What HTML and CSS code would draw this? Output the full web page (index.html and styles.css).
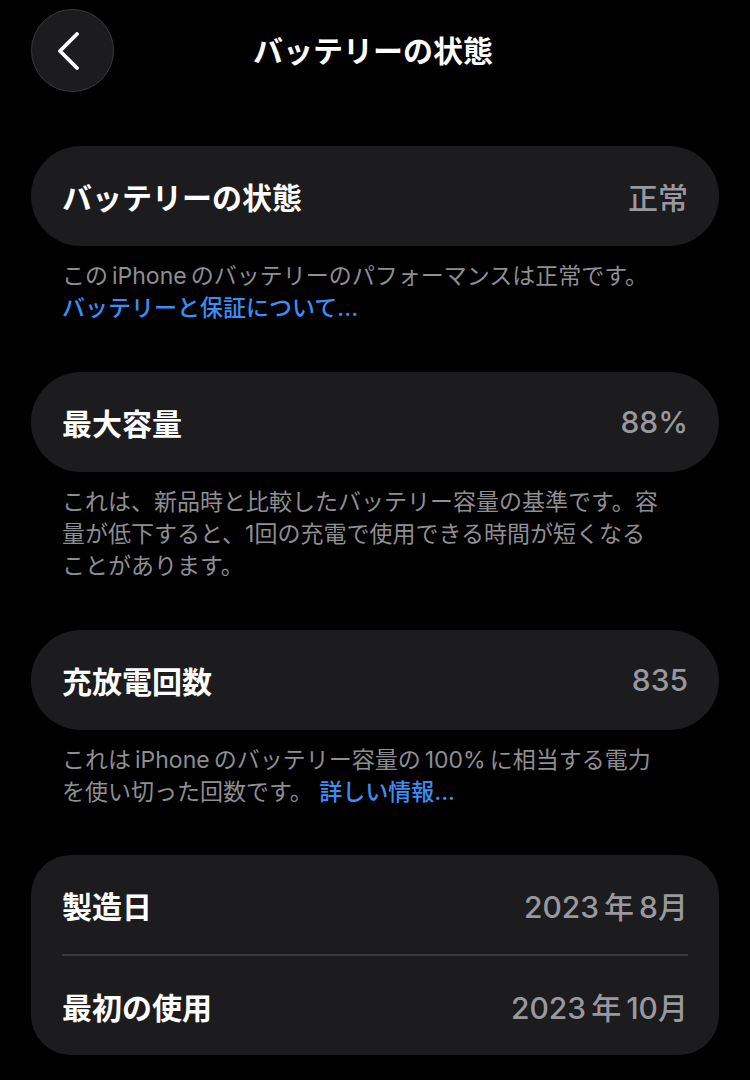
FILE: index.html
```html
<!DOCTYPE html>
<html lang="ja">
<head>
  <meta charset="UTF-8">
  <meta name="viewport" content="width=device-width, initial-scale=1.0">
  <title>バッテリーの状態</title>
  <link rel="stylesheet" href="styles.css">
</head>
<body>
  <header class="top-bar">
    <button class="back-btn" aria-label="戻る">
      <svg width="26" height="38" viewBox="0 0 26 38">
        <path d="M21 2 L4 19 L21 36" fill="none" stroke="#fff" stroke-width="3.8" stroke-linecap="round" stroke-linejoin="round"/>
      </svg>
    </button>
    <h1 class="title">バッテリーの状態</h1>
    <span></span>
  </header>

  <main>
    <div class="group">
      <div class="row">
        <span class="label">バッテリーの状態</span>
        <span class="value">正常</span>
      </div>
    </div>
    <p class="note">この<span class="latin">iPhone</span>のバッテリーのパフォーマンスは正常です。<br><a href="#" class="link">バッテリーと保証について...</a></p>

    <div class="group">
      <div class="row">
        <span class="label">最大容量</span>
        <span class="value">88%</span>
      </div>
    </div>
    <p class="note">これは、新品時と比較したバッテリー容量の基準です。容<br>量が低下すると、1回の充電で使用できる時間が短くなる<br>ことがあります。</p>

    <div class="group">
      <div class="row">
        <span class="label">充放電回数</span>
        <span class="value">835</span>
      </div>
    </div>
    <p class="note">これは<span class="latin">iPhone</span>のバッテリー容量の<span class="latin">100%</span>に相当する電力<br>を使い切った回数です。 <a href="#" class="link">詳しい情報...</a></p>

    <div class="group group-list">
      <div class="row">
        <span class="label">製造日</span>
        <span class="value">2023<span class="unit">年</span>8月</span>
      </div>
      <div class="divider"></div>
      <div class="row">
        <span class="label">最初の使用</span>
        <span class="value">2023<span class="unit">年</span>10月</span>
      </div>
    </div>
  </main>
</body>
</html>
```

FILE: styles.css
```css
body {
  background-color: #000;
  color: #fff;
  font-family: "Inter", "Noto Sans CJK JP", sans-serif;
  margin: 0;
  padding: 0 31px;
}

.top-bar {
  display: grid;
  grid-template-columns: 83px 1fr 83px;
  align-items: center;
  padding-top: 9px;
  margin-bottom: 54px;
}

.back-btn {
  width: 83px;
  height: 83px;
  border-radius: 50%;
  background-color: #1c1c1e;
  border: 1px solid #3a3a3c;
  display: flex;
  align-items: center;
  justify-content: center;
  padding: 0 8px 0 0;
  cursor: pointer;
}

.title {
  margin: 0 0 4px -4px;
  text-align: center;
  font-size: 30px;
  font-weight: 700;
}

main {
  display: flex;
  flex-direction: column;
}

.group {
  background-color: #1c1c1e;
  border-radius: 50px;
  padding: 0 31px;
}

.group-list {
  border-radius: 40px;
  margin-top: -1px;
}

.row {
  height: 100px;
  display: flex;
  align-items: center;
  justify-content: space-between;
}

.group-list .row {
  height: 99px;
}

.label {
  font-size: 30px;
  font-weight: 700;
}

.value {
  font-size: 30px;
  font-weight: 500;
  color: #98989e;
}

.unit {
  margin: 0 5px;
}

.divider {
  height: 2px;
  background-color: #3a3a3c;
}

.note {
  margin: 14px 0 48px;
  padding: 0 52px 0 31px;
  font-size: 23px;
  line-height: 32px;
  color: #8e8e93;
}

.latin {
  margin: 0 4px;
}

.link {
  color: #3b8ef5;
  text-decoration: none;
  font-weight: 500;
}
```
